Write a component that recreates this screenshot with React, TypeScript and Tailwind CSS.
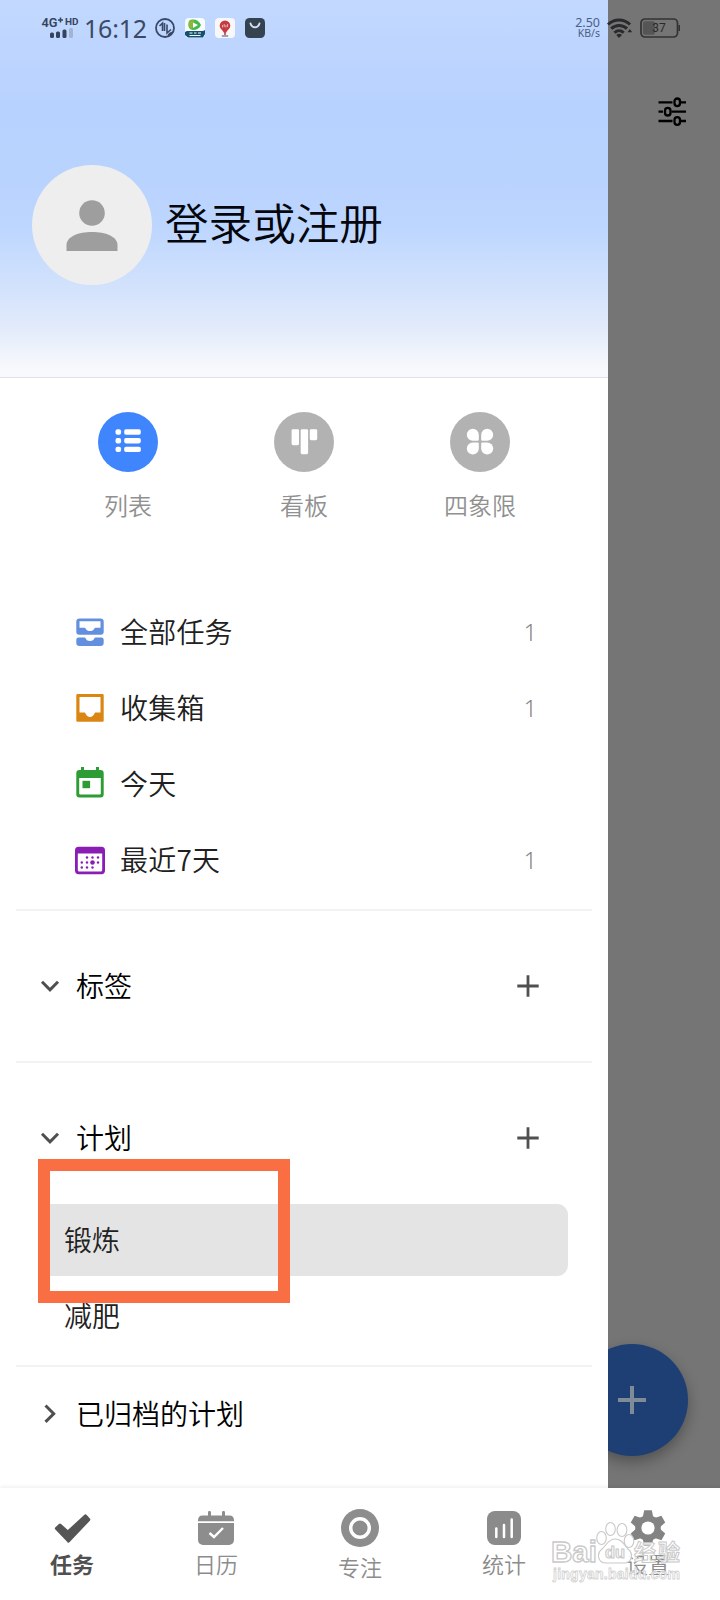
import React from "react";

const ListGlyph = () => (
  <svg className="h-[60px] w-[60px]" viewBox="0 0 60 60" fill="#fff">
    <circle cx="30" cy="30" r="30" fill="#3f85fd" />
    {[17.3, 26, 34.7].map((y) => (
      <g key={y}>
        <rect x="17.5" y={y} width="5.6" height="5.4" rx="2" />
        <rect x="26.2" y={y} width="16.6" height="5.4" rx="1.8" />
      </g>
    ))}
  </svg>
);

const BoardGlyph = () => (
  <svg className="h-[60px] w-[60px]" viewBox="0 0 60 60" fill="#fff">
    <circle cx="30" cy="30" r="30" fill="#b2b2b2" />
    <rect x="17.6" y="17.2" width="7.4" height="16" rx="1.4" />
    <rect x="26.7" y="17.2" width="7.4" height="25" rx="1.4" />
    <rect x="35.8" y="17.2" width="7.4" height="11" rx="1.4" />
  </svg>
);

const QuadGlyph = () => (
  <svg className="h-[60px] w-[60px]" viewBox="0 0 60 60" fill="#fff">
    <circle cx="30" cy="30" r="30" fill="#b2b2b2" />
    <path d="M22.8 16.8a6 6 0 0 1 6 6V27.8a1 1 0 0 1-1 1H22.8a6 6 0 0 1 0-12z" />
    <path d="M37.2 16.8a6 6 0 0 1 0 12H32.2a1 1 0 0 1-1-1V22.8a6 6 0 0 1 6-6z" />
    <path d="M22.8 30.6H27.8a1 1 0 0 1 1 1V36.6a6 6 0 1 1-6-6z" />
    <path d="M32.2 30.6H37.2a6 6 0 1 1-6 6V31.6a1 1 0 0 1 1-1z" />
  </svg>
);

const AllIcon = () => (
  <svg className="h-8 w-8" viewBox="0 0 32 32" fill="#6390de">
    <path
      fillRule="evenodd"
      d="M5.5 2.5h21a3.2 3.2 0 0 1 3.2 3.2v10a3 3 0 0 1-3.2 3h-21a3 3 0 0 1-3.2-3v-10a3.2 3.2 0 0 1 3.2-3.2zM5.5 5.3v6.5h5.2c1.2 0 1 3.3 5.3 3.3s4.1-3.3 5.3-3.3h5.2V5.3z"
    />
    <path d="M4.5 21.6h6.2c1.2 0 1 3.5 5.3 3.5s4.1-3.5 5.3-3.5h6.2a2.2 2.2 0 0 1 2.2 2.2v3a3.2 3.2 0 0 1-3.2 3.2h-21a3.2 3.2 0 0 1-3.2-3.2v-3a2.2 2.2 0 0 1 2.2-2.2z" />
  </svg>
);

const InboxIcon = () => (
  <svg className="h-8 w-8" viewBox="0 0 32 32" fill="#db8613">
    <path
      fillRule="evenodd"
      d="M3.5 2h25A1.2 1.2 0 0 1 29.7 3.2v25.4a1.2 1.2 0 0 1-1.2 1.2h-25a1.2 1.2 0 0 1-1.2-1.2V3.2A1.2 1.2 0 0 1 3.5 2zM5.5 5v15.5h5.2c1 0 1.200 4.500 5.300 4.500s4.300-4.500 5.300-4.500h5.200V5z"
    />
  </svg>
);

const TodayIcon = () => (
  <svg className="h-8 w-8 overflow-visible" viewBox="0 0 32 32" fill="#2e9c35">
    <rect x="7" y="-1" width="3" height="6" />
    <rect x="22" y="-1" width="3" height="6" />
    <path
      fillRule="evenodd"
      d="M5.500 2h21a3.200 3.200 0 0 1 3.200 3.200v21a3.200 3.200 0 0 1-3.200 3.200h-21a3.200 3.200 0 0 1-3.200-3.200v-21a3.200 3.200 0 0 1 3.200-3.200zM5.200 10v15.500a1 1 0 0 0 1 1h19.600a1 1 0 0 0 1-1V10z"
    />
    <rect x="8.500" y="12.800" width="7.600" height="7.400" />
  </svg>
);

const WeekIcon = () => (
  <svg className="h-8 w-8" viewBox="0 0 32 32" fill="#8a1eb4">
    <path
      fillRule="evenodd"
      d="M4.600 2.800h22.800a3.600 3.600 0 0 1 3.600 3.600v20.200a3.600 3.600 0 0 1-3.600 3.600h-22.800a3.600 3.600 0 0 1-3.600-3.600v-20.200a3.600 3.600 0 0 1 3.600-3.600zM3.800 9.500v16.500a1.600 1.600 0 0 0 1.600 1.600h21.200a1.600 1.600 0 0 0 1.600-1.600V9.500z"
    />
    {[
      [13, 13.5], [18.5, 13.5], [24, 13.5],
      [7.8, 18.5], [13, 18.5], [24, 18.5],
      [7.8, 23.5], [13, 23.5], [18.5, 23.5],
    ].map(([x, y]) => (
      <circle key={`${x}-${y}`} cx={x} cy={y} r="1.2" />
    ))}
    <circle cx="18.5" cy="18.5" r="2.3" />
  </svg>
);

const Chevron = ({ side = false }: { side?: boolean }) => (
  <svg className="h-6 w-6" viewBox="0 0 24 24" fill="none" stroke="#4f4f51" strokeWidth="3">
    <path d={side ? "M7.5 3.500l8.200 8.200-8.200 8.200" : "M4 7.800l8 8 8-8"} />
  </svg>
);

const Plus = () => (
  <svg className="h-6 w-6" viewBox="0 0 24 24" fill="none" stroke="#505050" strokeWidth="2.800">
    <path d="M12 1.300v21.400M1.300 12h21.400" />
  </svg>
);

const modes = [
  { label: "列表", icon: <ListGlyph /> },
  { label: "看板", icon: <BoardGlyph /> },
  { label: "四象限", icon: <QuadGlyph /> },
];

const lists = [
  { label: "全部任务", icon: <AllIcon />, count: "1" },
  { label: "收集箱", icon: <InboxIcon />, count: "1" },
  { label: "今天", icon: <TodayIcon />, count: "" },
  { label: "最近7天", icon: <WeekIcon />, count: "1" },
];

const SectionHead = ({ label }: { label: string }) => (
  <div className="flex h-[76px] items-center pr-[68px] pl-[38px]">
    <Chevron />
    <span className="mb-[2px] ml-[14px] flex-1 text-[28px] font-[350] text-black">{label}</span>
    <Plus />
  </div>
);

const Divider = () => <div className="mx-4 h-[2px] shrink-0 bg-[#f2f2f2]" />;

const StatusBar = () => (
  <div className="absolute inset-x-0 top-0 flex h-14 items-center pl-[41px] font-['Roboto','Noto_Sans_CJK_SC',sans-serif] text-[#3a4a66]">
    <svg className="h-6 w-[38px] overflow-visible" viewBox="0 0 38 24" fill="#36435c">
      <text x="0.5" y="11" fontSize="13.5" fontWeight="600" textLength="16" lengthAdjust="spacingAndGlyphs">4G</text>
      <path d="M17 4h5M19.500 1.500v5" stroke="#36435c" strokeWidth="1.500" />
      <text x="24" y="8.500" fontSize="9.500" fontWeight="700" textLength="13.500" lengthAdjust="spacingAndGlyphs">HD</text>
      <rect x="9" y="16.500" width="4" height="5.500" rx="1.500" />
      <rect x="15" y="15.500" width="4" height="6.500" rx="1.500" />
      <rect x="21.500" y="13.500" width="4" height="8.500" rx="1.500" />
      <rect x="28" y="12" width="4" height="10" rx="1.500" fill="#a3b3d6" />
    </svg>
    <span className="ml-[5px] w-[64px] font-['Noto_Sans',sans-serif] text-[25px] leading-none tracking-[-0.200px] whitespace-nowrap">16:12</span>
    <svg className="ml-[7px] h-5 w-5" viewBox="0 0 20 20" fill="none" stroke="#394967" strokeWidth="1.800">
      <circle cx="10" cy="10" r="9" />
      <path d="M4.500 8l3-2.800V13M9.500 5v8M12 6.500V15l4-3.500" strokeWidth="1.600" />
      <path d="M12.500 18.500c0-3 2-4.500 6-5-1 3-3 5-6 5z" fill="#394967" stroke="none" />
    </svg>
    <svg className="ml-[10px] h-5 w-5" viewBox="0 0 20 20">
      <rect width="20" height="20" rx="4" fill="#f8fcfc" />
      <path d="M4 3c4-3 10-1 12 4-2 5-8 6-11 4C3 9 3 6 4 3z" fill="#44b94c" />
      <path d="M4.200 3c2-1 4-1 5-.5L7 11.500C3.500 10 3.500 6 4.200 3z" fill="#8fb53b" />
      <path d="M8 4.500l5 2.500-5 3z" fill="#fff" />
      <path d="M0 14l2-1h16l2-1v4l-2 3.500H3L0 17z" fill="#15506d" />
      <path d="M4.500 15h3M9 15h2.500M13 15h3M4.500 17.500h11" stroke="#e9fbff" strokeWidth="1.200" />
    </svg>
    <svg className="ml-[10px] h-5 w-5" viewBox="0 0 20 20">
      <rect width="20" height="20" rx="4" fill="#f8f8fa" />
      <path d="M10 2.500a5.300 5.300 0 0 1 5.300 5.300c0 3-3 4.200-4 6.700H8.700c-1-2.500-4-3.700-4-6.700A5.300 5.300 0 0 1 10 2.500z" fill="#c73a3f" />
      <path d="M7.500 7v2.500M9.200 6v3M10.900 7v2.500M12.600 6v3" stroke="#fbe2e2" strokeWidth="0.700" />
      <path d="M10 14v3" stroke="#a43a40" strokeWidth="1.500" />
      <path d="M6.800 18h6.400" stroke="#72737d" strokeWidth="1.300" />
    </svg>
    <svg className="ml-[10px] h-5 w-5" viewBox="0 0 20 20">
      <rect width="20" height="20" rx="4.500" fill="#354351" />
      <path d="M5.500 5.500c1.500 5 7.500 5 9 0" fill="none" stroke="#d3e0ef" strokeWidth="1.900" strokeLinecap="round" />
    </svg>
    <div className="ml-auto flex w-[30px] flex-col items-end font-['Noto_Sans',sans-serif] text-[#4b5f84]">
      <span className="h-[11px] text-[12.500px] leading-[11px]">2.50</span>
      <span className="h-[11px] text-[10.500px] leading-[11px]">KB/s</span>
    </div>
    <svg className="ml-[7px] h-5 w-[26px]" viewBox="0 0 26 20" fill="none" stroke="#282a2c" strokeWidth="3">
      <path d="M1 6.500c6.500-6 15.500-6 22 0M4.200 10.700c4.500-4.300 11.300-4.300 15.800 0M7.500 14.700c2.700-2.700 6.500-2.700 9.200 0" />
      <path d="M9.300 17c1.700-1.600 4-1.600 5.700 0L12 20z" fill="#282a2c" stroke="none" />
      <path d="M20.500 14.200l2.300-3.200 2.400 3.200z" fill="#282a2c" stroke="none" />
    </svg>
    <svg className="mr-10 ml-[7px] h-5 w-10" viewBox="0 0 40 20">
      <rect x="1" y="1" width="36.500" height="18" rx="4" fill="none" stroke="#333" strokeWidth="1.700" />
      <rect x="3" y="3.200" width="12" height="13.600" rx="2.200" fill="#555" />
      <path d="M39.200 7v6" stroke="#333" strokeWidth="1.600" />
      <text x="12.300" y="14.300" fontSize="12" fill="#2a2a2a">37</text>
    </svg>
  </div>
);

const navItems = [
  {
    label: "任务",
    icon: (
      <svg className="h-10 w-10" viewBox="0 0 40 40">
        <path d="M4.500 20.500l3.500-3.300 7.800 7L33.500 8l3.200 3.600L16.500 33z" fill="#555" stroke="#555" strokeWidth="3.200" strokeLinejoin="round" />
      </svg>
    ),
  },
  {
    label: "日历",
    icon: (
      <svg className="h-10 w-10" viewBox="0 0 40 40" fill="#8d8d8d">
        <rect x="12" y="3" width="3" height="8" rx="1.200" />
        <rect x="26" y="3" width="3" height="8" rx="1.200" />
        <path d="M6.500 7.500h27q4.500 0 4.500 5V13.300H2v-.8q0-5 4.500-5z" />
        <path d="M2 15h36V32a5 5 0 0 1-5 5H7a5 5 0 0 1-5-5z" />
        <path d="M13.500 25l4.500 4 9-9" fill="none" stroke="#fff" strokeWidth="2.400" />
      </svg>
    ),
  },
  {
    label: "专注",
    icon: (
      <svg className="h-10 w-10" viewBox="0 0 40 40">
        <circle cx="20" cy="20" r="19" fill="#8d8d8d" />
        <circle cx="20" cy="20" r="9.300" fill="#8d8d8d" stroke="#fff" strokeWidth="3.400" />
      </svg>
    ),
  },
  {
    label: "统计",
    icon: (
      <svg className="h-10 w-10" viewBox="0 0 40 40">
        <rect x="3" y="3" width="34" height="34" rx="8" fill="#8b8b8b" />
        <path d="M12.300 20.500v8.500M20 17v12M27.700 11.500V29" stroke="#fff" strokeWidth="2.500" strokeLinecap="round" />
      </svg>
    ),
  },
  {
    label: "设置",
    icon: (
      <svg className="h-10 w-10" viewBox="0 0 40 40" fill="#838383">
        <circle cx="20" cy="20" r="12.800" />
        {[0, 60, 120, 180, 240, 300].map((a) => (
          <path key={a} transform={`rotate(${a} 20 20)`} d="M16.200 2.300h7.600l1.600 7.700h-10.800z" />
        ))}
        <circle cx="20" cy="20" r="6.600" fill="#fff" />
      </svg>
    ),
  },
];

const Watermark = () => (
  <svg
    className="absolute top-[32px] left-[548px] h-[64px] w-[136px] font-['Liberation_Sans','Noto_Sans_CJK_SC',sans-serif]"
    viewBox="0 0 136 64"
    fill="#fff"
    stroke="#c9c9c9"
    strokeWidth="1.100"
  >
    <g fillOpacity="0.850">
      <ellipse cx="53.500" cy="18" rx="4.800" ry="6.500" />
      <ellipse cx="62.500" cy="9" rx="4.800" ry="6.500" />
      <ellipse cx="74" cy="10" rx="4.900" ry="6.500" />
      <ellipse cx="81" cy="21" rx="4.800" ry="6.500" />
      <path d="M67 19c7 0 9 6 13 10 6 5 4 14-4 14-4 0-14 0-18 0-8 0-10-9-4-14 5-4 6-10 13-10z" />
    </g>
    <g fontWeight="700">
      <text x="3" y="42" fontSize="29" strokeWidth="1.300" textLength="46" lengthAdjust="spacingAndGlyphs">Bai</text>
      <text x="57" y="38" fontSize="17" strokeWidth="1.100" textLength="20" lengthAdjust="spacingAndGlyphs">du</text>
      <text x="86" y="40" fontSize="22" strokeWidth="1" fillOpacity="0.900" textLength="46">经验</text>
      <text x="5" y="59" fontSize="14" strokeWidth="0.800" stroke="#d2d2d2" fillOpacity="0.700" textLength="127">jingyan.baidu.com</text>
    </g>
  </svg>
);

export default function App() {
  return (
    <div className="relative flex h-[1600px] w-[720px] flex-col overflow-hidden bg-white font-['Noto_Sans_CJK_SC',sans-serif]">
      <div className="flex h-[1488px] shrink-0">
        <aside className="relative flex w-[608px] shrink-0 flex-col bg-white">
          <header className="flex h-[378px] shrink-0 items-center border-b border-[#e2e3e8] bg-[linear-gradient(180deg,#c2d8ff_0%,#b8d2ff_28%,#b9d3ff_48%,#bdd6ff_60%,#d2e2fc_76%,#e2ebfb_87%,#f8f9fc_98%)] pl-8">
            <div className="mt-[72px] size-[120px] rounded-full bg-[#eee]">
              <svg className="size-full" viewBox="0 0 120 120" fill="#9e9e9e">
                <circle cx="60" cy="48" r="12.800" />
                <path d="M34.500 86v-6c0-8.500 12-13 25.500-13s25.500 4.500 25.500 13v6z" />
              </svg>
            </div>
            <span className="mt-[66px] ml-[13px] text-[43.600px] leading-none font-[350] text-[#05070d]">登录或注册</span>
          </header>

          <div className="grid h-[217px] shrink-0 grid-cols-3 px-10 pt-[34px]">
            {modes.map((m) => (
              <div key={m.label} className="flex flex-col items-center">
                {m.icon}
                <span className="mt-[15px] text-[24px] leading-9 font-[350] text-[#909090]">{m.label}</span>
              </div>
            ))}
          </div>

          <div className="flex h-[314px] shrink-0 flex-col">
            {lists.map((l) => (
              <div key={l.label} className="flex h-[76px] items-center pr-[71px] pb-[2px] pl-[74px]">
                {l.icon}
                <span className="mb-[2px] ml-[14px] flex-1 text-[28px] font-[350] tracking-[0.200px] text-[#202020]">{l.label}</span>
                <span className="font-['Noto_Sans','Open_Sans',sans-serif] text-[23px] font-light text-[#858585]">{l.count}</span>
              </div>
            ))}
          </div>
          <Divider />
          <div className="h-[150px] shrink-0 pt-[37px]">
            <SectionHead label="标签" />
          </div>
          <Divider />
          <div className="h-[302px] shrink-0 pt-[37px]">
            <SectionHead label="计划" />
            <div className="mt-[28px] ml-10 flex h-[72px] w-[528px] items-center rounded-[11px] bg-[#e4e4e4] pb-[2px] pl-[24px] text-[28px] font-[350] text-[#222]">
              锻炼
            </div>
            <div className="ml-10 flex h-[80px] items-center pb-[2px] pl-[24px] text-[28px] font-[350] text-[#222]">减肥</div>
          </div>
          <Divider />
          <div className="flex h-[94px] items-center pl-[38px]">
            <Chevron side />
            <span className="mb-[2px] ml-[14px] text-[28px] font-[350] text-black">已归档的计划</span>
          </div>
          <div className="absolute top-[1158.500px] left-[37.500px] h-[144px] w-[252px] border-[12px] border-[#f96f43]" />
        </aside>

        <div className="relative flex-1 overflow-hidden bg-[#757575]">
          <svg className="mt-[96px] ml-[49px] h-8 w-8" viewBox="0 0 32 32" fill="none" stroke="#000" strokeWidth="2.300">
            <path d="M1.500 6.300h14M24 6.300h5M1.500 15.700h4.500M14.500 15.700h14.500M1.500 25h14M24 25h5" />
            <rect x="17.500" y="2.500" width="5.500" height="7.600" rx="2.750" />
            <rect x="8" y="11.900" width="5.500" height="7.600" rx="2.750" />
            <rect x="17.500" y="21.200" width="5.500" height="7.600" rx="2.750" />
          </svg>
          <div className="absolute top-[1344px] left-[-32px] flex size-[112px] items-center justify-center rounded-full bg-[#1d3f73] shadow-[0_6px_14px_rgba(0,0,0,0.3)]">
            <svg className="size-7" viewBox="0 0 28 28" stroke="#808b9a" strokeWidth="4">
              <path d="M14 0v28M0 14h28" />
            </svg>
          </div>
        </div>
      </div>

      <nav className="relative flex h-[112px] shrink-0 bg-white shadow-[0_-2px_3px_rgba(0,0,0,0.05)]">
        {navItems.map((n, i) => (
          <div
            key={n.label}
            className={
              "flex flex-1 flex-col items-center pt-5 text-[22px] leading-8 " +
              (i === 0 ? "font-bold text-[#505050]" : "font-[350] text-[#8c8c8c]")
            }
          >
            {n.icon}
            <span className={i === 2 ? "mt-[2px]" : "mt-[-1px]"}>{n.label}</span>
          </div>
        ))}
        <Watermark />
      </nav>
      <StatusBar />
    </div>
  );
}
